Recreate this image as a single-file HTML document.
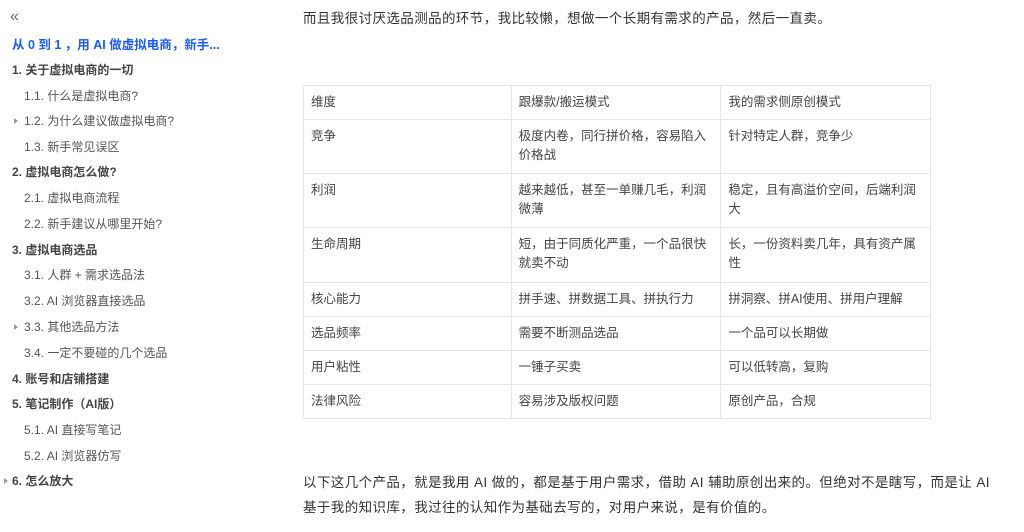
<!DOCTYPE html>
<html><head><meta charset="utf-8"><style>
body{margin:0;width:1024px;height:532px;background:#fff;font-family:"Liberation Sans","Noto Sans CJK SC",sans-serif;color:#333;overflow:hidden;position:relative}
.s{position:absolute;font-size:12px;color:#555;white-space:nowrap;line-height:14px}
.b{font-weight:bold;color:#444}
.t{color:#1a5cff;font-weight:bold;font-size:12.5px}
.tri{position:absolute;left:14px;width:0;height:0;border-left:4px solid #999;border-top:3px solid transparent;border-bottom:3px solid transparent}
.p{position:absolute;left:303px;font-size:13.5px;color:#333;line-height:25px;white-space:nowrap;letter-spacing:0.4px}
table{position:absolute;left:303px;top:85px;width:628px;border-collapse:collapse;font-size:12.5px;color:#444}
td{border:1px solid #e6e6e6;padding:7px 7px;vertical-align:top;line-height:19px}
</style></head><body>
<div class="s" style="left:10px;top:10px;font-size:16px;color:#666">«</div>
<div class="s t" style="left:12px;top:38px">从 0 到 1 ，用 AI 做虚拟电商，新手...</div>
<div class="s b" style="left:12px;top:63px">1. 关于虚拟电商的一切</div>
<div class="s" style="left:24px;top:89px">1.1. 什么是虚拟电商?</div>
<div class="tri" style="top:118px"></div><div class="s" style="left:24px;top:114px">1.2. 为什么建议做虚拟电商?</div>
<div class="s" style="left:24px;top:140px">1.3. 新手常见误区</div>
<div class="s b" style="left:12px;top:165px">2. 虚拟电商怎么做?</div>
<div class="s" style="left:24px;top:191px">2.1. 虚拟电商流程</div>
<div class="s" style="left:24px;top:217px">2.2. 新手建议从哪里开始?</div>
<div class="s b" style="left:12px;top:243px">3. 虚拟电商选品</div>
<div class="s" style="left:24px;top:268px">3.1. 人群 + 需求选品法</div>
<div class="s" style="left:24px;top:294px">3.2. AI 浏览器直接选品</div>
<div class="tri" style="top:324px"></div><div class="s" style="left:24px;top:320px">3.3. 其他选品方法</div>
<div class="s" style="left:24px;top:346px">3.4. 一定不要碰的几个选品</div>
<div class="s b" style="left:12px;top:372px">4. 账号和店铺搭建</div>
<div class="s b" style="left:12px;top:397px">5. 笔记制作（AI版）</div>
<div class="s" style="left:24px;top:423px">5.1. AI 直接写笔记</div>
<div class="s" style="left:24px;top:449px">5.2. AI 浏览器仿写</div>
<div class="tri" style="left:4px;top:478px"></div><div class="s b" style="left:12px;top:474px">6. 怎么放大</div>

<div class="p" style="top:6px">而且我很讨厌选品测品的环节，我比较懒，想做一个长期有需求的产品，然后一直卖。</div>
<table>
<colgroup><col style="width:208px"><col style="width:210px"><col style="width:210px"></colgroup>
<tr style="height:34px"><td>维度</td><td>跟爆款/搬运模式</td><td>我的需求侧原创模式</td></tr>
<tr style="height:54px"><td>竞争</td><td>极度内卷，同行拼价格，容易陷入价格战</td><td>针对特定人群，竞争少</td></tr>
<tr style="height:54px"><td>利润</td><td>越来越低，甚至一单赚几毛，利润微薄</td><td>稳定，且有高溢价空间，后端利润大</td></tr>
<tr style="height:55px"><td>生命周期</td><td>短，由于同质化严重，一个品很快就卖不动</td><td>长，一份资料卖几年，具有资产属性</td></tr>
<tr style="height:34px"><td>核心能力</td><td>拼手速、拼数据工具、拼执行力</td><td>拼洞察、拼AI使用、拼用户理解</td></tr>
<tr style="height:34px"><td>选品频率</td><td>需要不断测品选品</td><td>一个品可以长期做</td></tr>
<tr style="height:34px"><td>用户粘性</td><td>一锤子买卖</td><td>可以低转高，复购</td></tr>
<tr style="height:34px"><td>法律风险</td><td>容易涉及版权问题</td><td>原创产品，合规</td></tr>
</table>
<div class="p" style="top:470px">以下这几个产品，就是我用 AI 做的，都是基于用户需求，借助 AI 辅助原创出来的。但绝对不是瞎写，而是让 AI<br>基于我的知识库，我过往的认知作为基础去写的，对用户来说，是有价值的。</div>
</body></html>
